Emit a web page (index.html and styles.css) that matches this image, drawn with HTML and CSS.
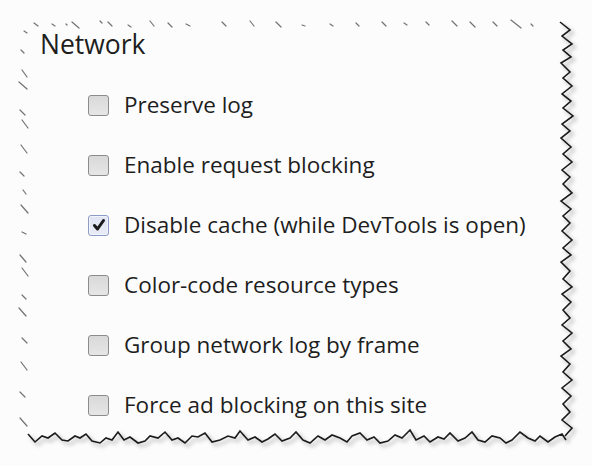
FILE: index.html
```html
<!DOCTYPE html>
<html>
<head>
<meta charset="utf-8">
<link rel="stylesheet" href="styles.css">
</head>
<body>
<div class="page">
  <svg class="edges" width="592" height="466" viewBox="0 0 592 466">
    <defs>
      <filter id="sh" x="-10%" y="-10%" width="120%" height="120%">
        <feGaussianBlur in="SourceAlpha" stdDeviation="2"/>
        <feOffset dx="3" dy="3" result="b"/>
        <feComponentTransfer><feFuncA type="linear" slope="0.35"/></feComponentTransfer>
        <feMerge><feMergeNode/><feMergeNode in="SourceGraphic"/></feMerge>
      </filter>
    </defs>
    <g class="right" filter="url(#sh)">
      <polyline points="560,22 570,30 562,36 572,44 563,50 571,57 561,63 570,72 563,78 572,86 562,94 571,101 563,108 573,116 562,124 570,131 561,138 571,147 563,154 572,162 562,170 570,177 563,184 572,193 561,201 571,209 563,216 570,223 562,231 572,240 563,248 571,255 561,262 570,271 563,279 572,287 562,294 571,302 563,310 570,318 562,325 572,333 563,341 571,349 561,356 570,364 563,372 572,380 562,388 571,396 563,404 570,412 562,420 572,428 565,436"/>
      <polyline points="28,434 35,442 42,436 48,438 55,433 62,440 68,441 75,436 80,438 86,434 92,441 100,443 106,438 112,440 118,432 124,440 130,437 138,443 145,441 150,436 158,438 165,432 172,440 178,438 185,443 192,436 198,437 205,433 212,442 220,440 228,436 235,438 240,431 248,440 255,437 262,442 268,439 275,434 282,441 290,438 296,432 303,440 310,443 318,436 325,440 332,435 340,438 347,442 352,436 360,433 367,440 374,437 380,443 388,441 395,435 402,438 410,430 416,440 424,436 430,442 438,437 444,439 450,433 458,441 465,438 472,432 478,440 485,442 492,436 500,438 506,443 512,440 520,432 528,438 535,441 540,436 548,442 555,437 562,434 566,440"/>
    </g>
    <g class="dash">
      <path d="M34,23l4,3 M52,24l3,2 M66,24l1,1 M72,22l7,6 M100,21l2,2 M108,22l4,4 M128,25l3,2 M150,21l4,5 M168,23l4,4 M186,24l4,2 M404,23l3,2 M426,22l3,3 M452,21l5,5 M470,22l5,5 M493,22l4,4 M511,20l10,8 M531,24l2,2 M222,22l4,4 M250,21l4,5 M276,22l5,5 M302,25l3,1 M330,24l3,2 M356,23l3,3 M382,22l4,4"/>
      <path d="M24,31l3,2 M21,50l3,3 M22,70l5,7 M19,82l8,7 M20,110l5,5 M22,120l6,8 M21,145l6,8 M20,172l4,4 M23,190l3,4 M21,205l7,8 M22,232l4,2 M20,255l6,7 M22,268l6,8 M22,295l4,4 M19,308l7,8 M22,338l5,5 M21,362l6,8 M20,392l5,5 M20,418l7,8"/>
    </g>
  </svg>
  <div class="panel">
    <h1 class="title">Network</h1>
    <ul class="list">
      <li class="item"><span class="box"></span><span class="label">Preserve log</span></li>
      <li class="item"><span class="box"></span><span class="label">Enable request blocking</span></li>
      <li class="item"><span class="box checked"><svg width="14" height="14" viewBox="0 0 14 14"><path d="M2.5,7.5 L5.5,11 L11.5,2.5" fill="none" stroke="#1a1a1a" stroke-width="3" stroke-linecap="round" stroke-linejoin="round"/></svg></span><span class="label">Disable cache (while DevTools is open)</span></li>
      <li class="item"><span class="box"></span><span class="label">Color-code resource types</span></li>
      <li class="item"><span class="box"></span><span class="label">Group network log by frame</span></li>
      <li class="item"><span class="box"></span><span class="label">Force ad blocking on this site</span></li>
    </ul>
  </div>
</div>
</body>
</html>
```
FILE: styles.css
```css
html, body {
  margin: 0;
  padding: 0;
  background: #fcfcfc;
}
.page {
  position: relative;
  width: 592px;
  height: 466px;
  overflow: hidden;
  font-family: "Open Sans", "Noto Sans", sans-serif;
  color: #1e1e1e;
}
.edges {
  position: absolute;
  left: 0;
  top: 0;
}
.edges .right polyline {
  fill: none;
  stroke: #1a1a1a;
  stroke-width: 1.6;
  stroke-linejoin: miter;
}
.edges .dash path {
  fill: none;
  stroke: #444;
  stroke-width: 1.2;
  stroke-linecap: round;
  opacity: 0.75;
}
.panel {
  padding: 24px 0 0 40px;
}
.title {
  margin: 0;
  font-size: 26.5px;
  font-weight: 400;
  line-height: 40px;
}
.list {
  list-style: none;
  margin: 0;
  padding: 0 0 0 48px;
  display: flex;
  flex-direction: column;
  margin-top: 11px;
}
.item {
  display: flex;
  align-items: center;
  height: 60px;
  gap: 15px;
}
.box {
  width: 21px;
  height: 21px;
  border: 1.5px solid #8c8c8c;
  border-radius: 3px;
  background: linear-gradient(#d9d9d9, #e6e6e6);
  box-sizing: border-box;
  display: flex;
  align-items: center;
  justify-content: center;
  flex: none;
}
.box.checked {
  border-color: #8e9bc6;
  background: linear-gradient(#dfe4f3, #e9ecf6);
  box-shadow: inset 0 0 0 1px #f2f4fb;
}
.label {
  font-size: 22.5px;
  line-height: 30px;
}
```
